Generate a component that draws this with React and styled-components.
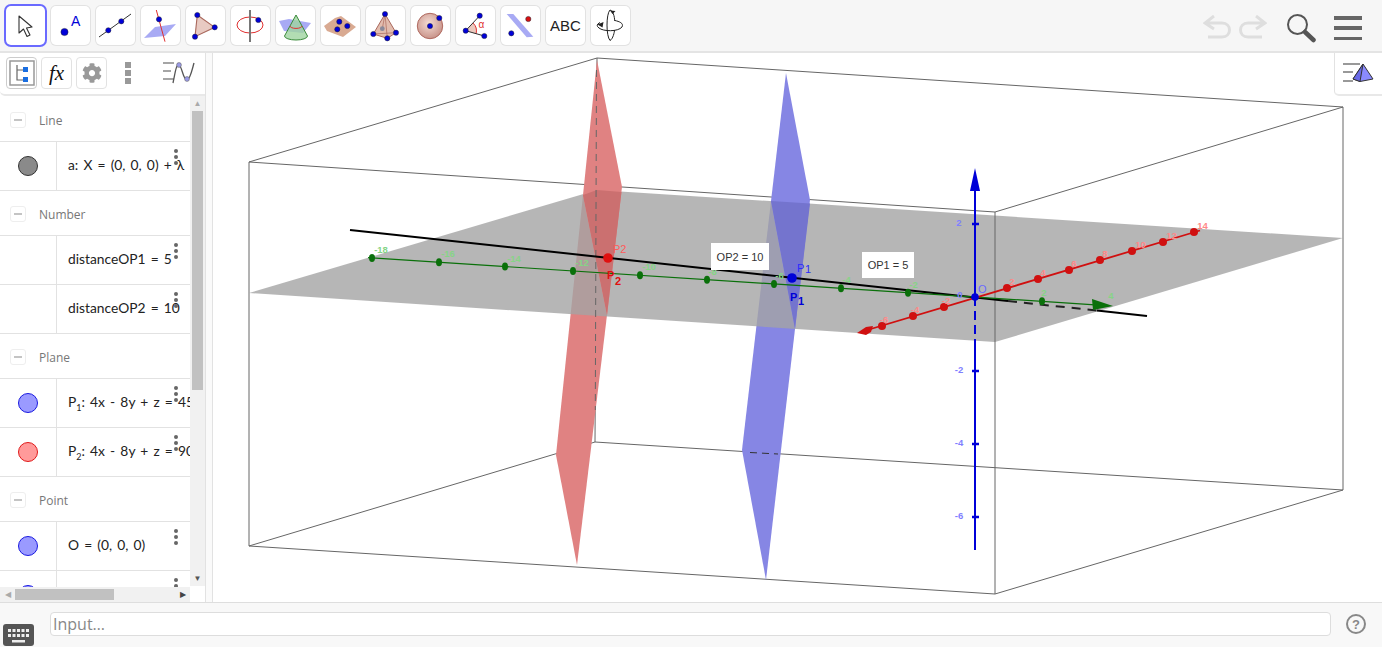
import React from "react";
import styled, { createGlobalStyle } from "styled-components";
import { FaCog } from "react-icons/fa";

const GlobalStyle = createGlobalStyle`
  html, body {
    margin: 0;
    height: 100%;
    overflow: hidden;
    background: #fff;
    font-family: "Liberation Sans", Arial, sans-serif;
  }
  #root { height: 100%; }
`;

const blue = "#0000d8";

const AbcLabel = styled.span`
  font-size: 15px;
  color: #222;
`;

const Dot = ({ x, y, r = 2.6, fill = blue }) => (
  <circle cx={x} cy={y} r={r} fill={fill} stroke="#223" strokeWidth="0.5" />
);

const Svg39 = ({ children }) => (
  <svg width="39" height="39" viewBox="0 0 39 39">
    {children}
  </svg>
);

const tools = [
  <Svg39 key="move">
    <path d="M13 10V27L17.5 23L21 30.5L24 29L20.5 22L26 21Z" fill="#fff" stroke="#333" strokeWidth="1.1" strokeLinejoin="round" />
  </Svg39>,
  <Svg39 key="point">
    <Dot x={13.5} y={26} r={3.6} />
    <text x="20" y="20" fontSize="14" fill={blue} fontFamily="Liberation Sans">A</text>
  </Svg39>,
  <Svg39 key="line">
    <line x1="3" y1="31" x2="35" y2="8" stroke="#333" strokeWidth="1" />
    <Dot x={12.3} y={24.3} />
    <Dot x={25.3} y={15.3} />
  </Svg39>,
  <Svg39 key="perp">
    <polygon points="3,32 14,21 35,18 24,30" fill="#a8aaf4" />
    <line x1="15.3" y1="4" x2="24" y2="35.7" stroke="#e03030" strokeWidth="1" />
    <Dot x={18} y={13.3} />
  </Svg39>,
  <Svg39 key="polygon">
    <polygon points="11.3,9 28.7,21.3 9,30.7" fill="#e8cac2" stroke="#a9685c" strokeWidth="1.1" />
    <Dot x={11.3} y={9} />
    <Dot x={28.7} y={21.3} />
    <Dot x={9} y={30.7} />
  </Svg39>,
  <Svg39 key="circle">
    <ellipse cx="19" cy="19" rx="13" ry="8" fill="none" stroke="#e03030" strokeWidth="1" />
    <line x1="19" y1="4" x2="19" y2="36" stroke="#777" strokeWidth="2" />
    <Dot x={27.3} y={14} />
  </Svg39>,
  <Svg39 key="cone">
    <polygon points="3,15 13,13 35,17 27,27 8,25" fill="#a8aaf4" />
    <path d="M20 9L8.5 30A11.500 4 0 0 0 31.500 30Z" fill="#9fd4a0" fillOpacity="0.8" stroke="#3a8a3a" strokeWidth="1" />
    <path d="M14 20A6 2.400 0 0 0 26 20" fill="none" stroke="#e03030" strokeWidth="1" />
  </Svg39>,
  <Svg39 key="plane">
    <polygon points="3,20 14,12 20,10 35,21 22,31 6,25" fill="#d9aa92" />
    <Dot x={18.3} y={15.7} />
    <Dot x={26.3} y={20} />
    <Dot x={16.3} y={23.3} />
  </Svg39>,
  <Svg39 key="pyramid">
    <polygon points="19,8 7.3,28 21.3,32.3 30,26.7" fill="#e2bcae" stroke="#a9685c" strokeWidth="1" />
    <path d="M19 8L21.3 32.3M19 8L16.3 22.7M7.3 28L30 26.7" stroke="#a9685c" strokeWidth="0.7" fill="none" />
    <circle cx="16.3" cy="22.7" r="2.4" fill="#8a8a9a" />
    <Dot x={19} y={8} />
    <Dot x={7.3} y={28} />
    <Dot x={30} y={26.7} />
    <Dot x={21.3} y={32.3} />
  </Svg39>,
  <Svg39 key="sphere">
    <defs>
      <radialGradient id="sphereFill" cx="0.45" cy="0.4" r="0.65">
        <stop offset="0" stopColor="#f4dcd4" />
        <stop offset="1" stopColor="#c58e84" />
      </radialGradient>
    </defs>
    <circle cx="19" cy="20" r="12.7" fill="url(#sphereFill)" stroke="#b06a60" strokeWidth="1" />
    <Dot x={19} y={20} />
    <Dot x={28.3} y={12} />
  </Svg39>,
  <Svg39 key="angle">
    <path d="M9.7 24.7L17 17A11 11 0 0 1 20 28Z" fill="#eccabf" />
    <path d="M17 17A11 11 0 0 1 20 28" fill="none" stroke="#e03030" strokeWidth="1" />
    <path d="M23.7 9.7L9.7 24.7L28.3 30" fill="none" stroke="#333" strokeWidth="1" />
    <Dot x={23.7} y={9.7} />
    <Dot x={9.7} y={24.7} />
    <Dot x={28.3} y={30} />
    <text x="22.5" y="22" fontSize="10" fill="#e03030" fontFamily="Liberation Sans">α</text>
  </Svg39>,
  <Svg39 key="mirror">
    <polygon points="5.7,8 12.3,8 32.3,30.7 25.7,31.3" fill="#a8aaf4" />
    <Dot x={27.3} y={13} fill="#d81010" />
    <Dot x={10.3} y={27.3} />
  </Svg39>,
  <AbcLabel key="abc">ABC</AbcLabel>,
  <Svg39 key="rotate">
    <path d="M9 16.500A12.700 5 0 0 0 8 22C12 25.500 27 26 31 21C33 17 28 15.500 24 14.500" fill="none" stroke="#222" strokeWidth="1" />
    <path d="M19 4C15 8 15 30 19 34.500C22 33 23.500 26 23.500 24M19 4C22 5 23.500 10 23.700 15" fill="none" stroke="#222" strokeWidth="1" />
    <path d="M6.500 18.500L12.500 16L11.500 21.500Z M21.500 8L19 4.500L24.500 5Z" fill="#222" />
  </Svg39>,
];

const groups = [
  { title: "Line", rows: [{ marble: "gray", text: "a: X = (0, 0, 0) + λ" }] },
  {
    title: "Number",
    rows: [{ text: "distanceOP1 = 5" }, { text: "distanceOP2 = 10" }],
  },
  {
    title: "Plane",
    rows: [
      { marble: "blue", sub: "1", text: ": 4x - 8y + z = 45" },
      { marble: "red", sub: "2", text: ": 4x - 8y + z = 90" },
    ],
  },
  {
    title: "Point",
    rows: [{ marble: "blue", text: "O = (0, 0, 0)" }, { marble: "blue", text: "" }],
  },
];

const marbles = {
  gray: ["#8a8a8a", "#333"],
  blue: ["#9a9aff", "#1a1ae0"],
  red: ["#ff9a9a", "#e01a1a"],
};

const greenTicks = [
  [372, "-18"], [439, "-16"], [505, "-14"], [573, "-12"], [640, "-10"], [707, "-8"],
  [774, "-6"], [841, "-4"], [908, "-2"], [1042, "2"],
];
const redTicks = [
  [882, 326, "-6"], [913, 316, "-4"], [944, 307, "-2"], [1007, 288, "2"], [1038, 279, "4"],
  [1069, 270, "6"], [1100, 260, "8"], [1132, 251, "10"], [1163, 242, "12"], [1194, 232, "14"],
];
const blueTicks = [[224, "2"], [371, "-2"], [444, "-4"], [517, "-6"]];

const greenY = (x) => 297 + (x - 975) * 0.0647;

const Scene = () => (
  <SceneSvg viewBox="213 53 1169 549">
    <g stroke="#666" strokeWidth="1" fill="none">
      <path d="M249 162L597 58L1343 107L995 212ZM249 546L595 442L1343 490L995 594ZM249 162V546M1343 107V490M597 58L595 442" />
    </g>

    <polygon points="583,195 607,315 577,565 556,455" fill="#e08282" />
    <polygon points="771,201 795,329 766,580 742,450" fill="#8686e4" />
    <polygon points="249,293 597,190 1343,238 995,342" fill="#a4a4a4" fillOpacity="0.8" />
    <polygon points="597,60 622,187 607,315 583,195" fill="#e08282" />
    <polygon points="583,195 597,190 621.5,192 607,315" fill="#cb7070" />
    <polygon points="786,73 810,200 795,329 771,201" fill="#8686e4" />
    <polygon points="771,201 810,203.5 795,329" fill="#7474ce" />

    <line x1="596.5" y1="70" x2="595.3" y2="410" stroke="#666" strokeDasharray="7 5" />
    <line x1="750" y1="452.5" x2="778" y2="454" stroke="#333" strokeDasharray="7 5" />
    <line x1="995" y1="212" x2="995" y2="594" stroke="#666" />

    <line x1="350" y1="230" x2="1008" y2="301" stroke="#000" strokeWidth="2" />
    <line x1="1008" y1="301" x2="1097" y2="310.6" stroke="#222" strokeWidth="2" strokeDasharray="9 7" />
    <line x1="1097" y1="310.6" x2="1147" y2="316" stroke="#000" strokeWidth="2" />

    <line x1="368" y1="257.7" x2="1095" y2="304.8" stroke="#0a700a" strokeWidth="1.2" />
    <polygon points="1113,306 1092,299 1093,310" fill="#0a700a" />
    {greenTicks.map(([x, label]) => (
      <g key={x}>
        <ellipse cx={x} cy={greenY(x)} rx="3" ry="4" fill="#0a700a" />
        <AxisLabel x={x + 2 + 3.5 * (label.length - 1)} y={greenY(x) - 5} fill="#86d486">{label}</AxisLabel>
      </g>
    ))}
    <AxisLabel x={1111} y={299} fill="#86d486">4</AxisLabel>

    <line x1="864" y1="331" x2="1200" y2="230.5" stroke="#d01010" strokeWidth="1.8" />
    <polygon points="857,333 866,327 873,326 871,332 866,335" fill="#d01010" />
    {redTicks.map(([x, y, label]) => (
      <g key={x}>
        <circle cx={x} cy={y} r="4" fill="#d01010" />
        <AxisLabel
          x={label[0] === "-" ? x + 2 : x + 5 + 3.5 * (label.length - 1)}
          y={y - 3}
          fill="#ff8888"
        >
          {label}
        </AxisLabel>
      </g>
    ))}

    <line x1="975" y1="188" x2="975" y2="297" stroke={blue} strokeWidth="2" />
    <line x1="975" y1="297" x2="975" y2="342" stroke={blue} strokeWidth="2" strokeDasharray="9 5" />
    <line x1="975" y1="342" x2="975" y2="550" stroke={blue} strokeWidth="2" />
    <polygon points="975,168 970,191 980,191" fill={blue} />
    {blueTicks.map(([y, label]) => (
      <g key={y}>
        <line x1="972" y1={y} x2="979" y2={y} stroke={blue} strokeWidth="2.5" />
        <AxisLabel x={959} y={y + 2} fill="#7f7fff">{label}</AxisLabel>
      </g>
    ))}
    <AxisLabel x={960} y={298} fill="#7f7fff">0</AxisLabel>

    <circle cx="975" cy="297" r="3.8" fill={blue} />
    <PointLabel x={978} y={293} fill="#6a6aff" fontSize="11">O</PointLabel>

    <circle cx="792" cy="278" r="4.8" fill={blue} />
    <PointLabel x={797} y={272} fill="#2a2aff">P</PointLabel>
    <PointLabel x={805} y={273} fill="#2a2aff" fontSize="9">1</PointLabel>
    <PointLabel x={790} y={301} fill={blue} fontWeight="bold">P</PointLabel>
    <PointLabel x={798} y={305} fill={blue} fontSize="9" fontWeight="bold">1</PointLabel>

    <circle cx="608" cy="258" r="4.8" fill="#e01010" />
    <PointLabel x={613} y={253} fill="#ff5a5a">P2</PointLabel>
    <PointLabel x={607} y={279} fill="#e01010" fontWeight="bold">P</PointLabel>
    <PointLabel x={615} y={285} fill="#e01010" fontSize="9" fontWeight="bold">2</PointLabel>
  </SceneSvg>
);

const App = () => (
  <Page>
    <GlobalStyle />
    <Toolbar>
      <ToolGroup>
        {tools.map((icon, i) => (
          <ToolButton key={i} $active={i === 0}>{icon}</ToolButton>
        ))}
      </ToolGroup>
      <RightTools>
        <svg width="64" height="26" viewBox="0 0 64 26">
          <path d="M3 8H19C29 8 29 22 19 22H5M11 1L2 8L11 14" fill="none" stroke="#dedede" strokeWidth="3" />
          <path d="M61 8H45C35 8 35 22 45 22H59M53 1L62 8L53 14" fill="none" stroke="#dedede" strokeWidth="3" />
        </svg>
        <SearchIcon width="30" height="30" viewBox="0 0 30 30">
          <circle cx="11.5" cy="11.5" r="9.5" fill="none" stroke="#555" strokeWidth="2" />
          <line x1="19" y1="19" x2="27.5" y2="27" stroke="#555" strokeWidth="4.5" strokeLinecap="round" />
        </SearchIcon>
        <Burger>
          <span />
          <span />
          <span />
        </Burger>
      </RightTools>
    </Toolbar>

    <Main>
      <SidePanel>
        <PanelHeader>
          <HeaderButton $strong>
            <svg width="26" height="26" viewBox="0 0 26 26">
              <rect x="1" y="1" width="24" height="24" fill="none" stroke="#999" strokeWidth="1.5" />
              <path d="M8 5V20H15M8 10H15" fill="none" stroke="#666" strokeWidth="1.2" />
              <rect x="14" y="7" width="5" height="5" fill="#1a6ee0" />
              <rect x="14" y="17" width="5" height="5" fill="#1a6ee0" />
            </svg>
          </HeaderButton>
          <HeaderButton><Fx>fx</Fx></HeaderButton>
          <HeaderButton><FaCog size={20} color="#999" /></HeaderButton>
          <MoreBars>
            <span />
            <span />
            <span />
          </MoreBars>
          <StyleIcon width="34" height="26" viewBox="0 0 34 26">
            <path d="M1 3H12M1 11H9M1 19H12" stroke="#888" strokeWidth="1.5" />
            <path d="M11 23C13 14 14 4 17 5C20 6 21 20 25 20C28 20 30 10 32 3" fill="none" stroke="#555" strokeWidth="1.3" />
            <circle cx="17" cy="5" r="2.4" fill="#9a9ae8" stroke="#666" strokeWidth="0.6" />
            <circle cx="25" cy="19" r="2.4" fill="#9a9ae8" stroke="#666" strokeWidth="0.6" />
          </StyleIcon>
        </PanelHeader>
        <ListArea>
          <List>
            {groups.map((group) => (
              <React.Fragment key={group.title}>
                <GroupTitle>
                  <Collapse />
                  <GroupName>{group.title}</GroupName>
                </GroupTitle>
                {group.rows.map((row, i) => (
                  <Row key={i}>
                    <MarbleCell>
                      {row.marble && <Marble $kind={row.marble} />}
                    </MarbleCell>
                    <RowText>
                      {row.sub ? <>P<sub>{row.sub}</sub></> : null}
                      {row.text}
                    </RowText>
                    <RowDots>
                      <span />
                      <span />
                      <span />
                    </RowDots>
                  </Row>
                ))}
              </React.Fragment>
            ))}
          </List>
          <VScroll>
            <Arrow>▲</Arrow>
            <VThumb />
            <Arrow>▼</Arrow>
          </VScroll>
          <HScroll>
            <HArrow $dim>◀</HArrow>
            <HThumb />
            <HArrow>▶</HArrow>
          </HScroll>
        </ListArea>
      </SidePanel>
      <Divider />
      <Graphics>
        <Scene />
        <StyleTab>
          <svg width="34" height="24" viewBox="0 0 34 24">
            <path d="M1 2H18M1 10H11M1 19H11" stroke="#999" strokeWidth="2" />
            <polygon points="21,2 31,17 18,19.5 11,17" fill="#8a8aff" stroke="#333" strokeWidth="1" />
            <polygon points="21,2 11,17 18,19.5" fill="#6a6ae8" stroke="#333" strokeWidth="1" />
          </svg>
        </StyleTab>
        <Note $x={498} $y={190} $w={58} $h={27}>OP2 = 10</Note>
        <Note $x={649} $y={199} $w={52} $h={26}>OP1 = 5</Note>
      </Graphics>
    </Main>

    <BottomBar>
      <Keyboard width="31" height="22" viewBox="0 0 31 22">
        <rect width="31" height="22" rx="3" fill="#555" />
        <path d="M5 5h3v3h-3zM9.500 5h3v3h-3zM14 5h3v3h-3zM18.500 5h3v3h-3zM23 5h3v3h-3zM5 10h3v3h-3zM9.500 10h3v3h-3zM14 10h3v3h-3zM18.500 10h3v3h-3zM23 10h3v3h-3zM9 16h13v2.500h-13z" fill="#eee" />
      </Keyboard>
      <InputBox placeholder="Input…" />
      <Help>?</Help>
    </BottomBar>
  </Page>
);

export default App;

const Page = styled.div`
  display: grid;
  grid-template-rows: 53px 1fr 45px;
  height: 100vh;
  width: 100%;
  overflow: hidden;
`;

const Toolbar = styled.header`
  display: flex;
  align-items: flex-start;
  justify-content: space-between;
  box-sizing: border-box;
  padding: 6px 20px 0 6px;
  background: #f6f6f6;
  border-bottom: 2px solid #e4e4e4;
`;

const ToolGroup = styled.div`
  display: flex;
  gap: 6px;
`;

const ToolButton = styled.div`
  position: relative;
  display: flex;
  align-items: center;
  justify-content: center;
  box-sizing: border-box;
  width: 39px;
  height: 39px;
  background: #fff;
  border-radius: 5px;
  box-shadow: 0 0 0 ${(p) => (p.$active ? "2px #6a6aff" : "1px #e2e2e2")};

  svg {
    position: absolute;
    left: 0;
    top: 0;
  }
`;

const RightTools = styled.div`
  display: flex;
  align-items: center;
  padding-top: 7px;
`;

const SearchIcon = styled.svg`
  margin-left: 19px;
`;

const Burger = styled.div`
  display: flex;
  flex-direction: column;
  justify-content: space-between;
  width: 28px;
  height: 24px;
  margin-left: 18px;

  span {
    display: block;
    height: 3.5px;
    background: #666;
  }
`;

const Main = styled.main`
  display: flex;
  min-height: 0;
`;

const SidePanel = styled.aside`
  display: flex;
  flex-direction: column;
  flex: 0 0 205px;
  min-height: 0;
`;

const PanelHeader = styled.div`
  display: flex;
  align-items: center;
  gap: 4px;
  box-sizing: border-box;
  height: 43px;
  padding: 0 0 1px 6px;
  background: #fff;
  border-bottom: 2px solid #e8e8e8;
  border-bottom-left-radius: 5px;
`;

const HeaderButton = styled.div`
  display: flex;
  align-items: center;
  justify-content: center;
  box-sizing: border-box;
  width: 31px;
  height: 32px;
  border: 1px solid ${(p) => (p.$strong ? "#ccc" : "#e2e2e2")};
  border-radius: 4px;
`;

const Fx = styled.span`
  font-family: "Liberation Serif", serif;
  font-style: italic;
  font-size: 21px;
  color: #111;
`;

const MoreBars = styled.div`
  display: flex;
  flex-direction: column;
  gap: 2px;
  margin-left: 14px;

  span {
    display: block;
    width: 6px;
    height: 6px;
    background: #999;
  }
`;

const StyleIcon = styled.svg`
  margin-left: 27px;
`;

const ListArea = styled.div`
  position: relative;
  flex: 1;
  min-height: 0;
  overflow: hidden;
`;

const List = styled.div`
  box-sizing: border-box;
  width: 190px;
  height: 491px;
  padding-top: 1px;
  overflow: hidden;
`;

const GroupTitle = styled.div`
  display: flex;
  align-items: center;
  box-sizing: border-box;
  height: 45px;
  padding: 2px 0 0 10px;
  border-bottom: 1px solid #e2e2e2;
`;

const Collapse = styled.span`
  position: relative;
  box-sizing: border-box;
  width: 16px;
  height: 16px;
  border: 1px solid #eee;
  border-radius: 3px;

  &::after {
    content: "";
    position: absolute;
    left: 3px;
    right: 3px;
    top: 6px;
    height: 2px;
    background: #c4c4c4;
  }
`;

const GroupName = styled.span`
  margin-left: 13px;
  font-family: "Open Sans", sans-serif;
  font-size: 12px;
  color: #777;
`;

const Row = styled.div`
  position: relative;
  display: flex;
  box-sizing: border-box;
  height: 49px;
  border-bottom: 1px solid #e2e2e2;
  overflow: hidden;
`;

const MarbleCell = styled.div`
  display: flex;
  align-items: center;
  justify-content: center;
  flex: 0 0 56px;
  border-right: 1px solid #e2e2e2;
`;

const Marble = styled.span`
  box-sizing: border-box;
  width: 20px;
  height: 20px;
  border-radius: 50%;
  background: ${(p) => marbles[p.$kind][0]};
  border: 1px solid ${(p) => marbles[p.$kind][1]};
`;

const RowText = styled.div`
  align-self: center;
  margin-left: 11px;
  padding-bottom: 3px;
  font-family: "Lato", sans-serif;
  font-size: 13.8px;
  word-spacing: 1.6px;
  color: #222;
  white-space: nowrap;

  sub {
    font-size: 9px;
    line-height: 0;
  }
`;

const RowDots = styled.div`
  position: absolute;
  left: 174px;
  top: 7px;
  display: flex;
  flex-direction: column;
  gap: 2px;

  span {
    display: block;
    width: 4px;
    height: 4px;
    border-radius: 50%;
    background: #666;
  }
`;

const VScroll = styled.div`
  position: absolute;
  right: 0;
  top: 0;
  bottom: 16px;
  display: flex;
  flex-direction: column;
  align-items: center;
  justify-content: space-between;
  width: 15px;
  background: #f1f1f1;
`;

const Arrow = styled.span`
  font-size: 8px;
  line-height: 15px;
  color: #555;

  &:first-child {
    color: #aaa;
  }
`;

const VThumb = styled.div`
  width: 11px;
  height: 279px;
  margin-bottom: auto;
  background: #c1c1c1;
`;

const HScroll = styled.div`
  position: absolute;
  left: 0;
  bottom: 0;
  display: flex;
  align-items: center;
  box-sizing: border-box;
  width: 190px;
  height: 15px;
  background: #f1f1f1;
`;

const HArrow = styled.span`
  flex: 0 0 15px;
  font-size: 8px;
  text-align: center;
  color: ${(p) => (p.$dim ? "#aaa" : "#444")};

  &:last-child {
    margin-left: auto;
  }
`;

const HThumb = styled.div`
  width: 99px;
  height: 11px;
  background: #c1c1c1;
`;

const Divider = styled.div`
  flex: 0 0 6px;
  background: #fafafa;
  border-left: 1px solid #e2e2e2;
  border-right: 1px solid #e2e2e2;
`;

const Graphics = styled.section`
  position: relative;
  flex: 1;
  min-width: 0;
  background: #fff;
`;

const SceneSvg = styled.svg`
  display: block;
  width: 100%;
  height: 100%;
`;

const AxisLabel = styled.text`
  font-family: "Liberation Sans", sans-serif;
  font-size: 9.5px;
  font-weight: bold;
  text-anchor: middle;
`;

const PointLabel = styled.text`
  font-family: "Liberation Sans", sans-serif;
  font-size: 11px;
`;

const StyleTab = styled.div`
  position: absolute;
  right: 0;
  top: 0;
  display: flex;
  align-items: center;
  justify-content: center;
  box-sizing: border-box;
  width: 48px;
  height: 43px;
  background: #fff;
  border-left: 1px solid #e2e2e2;
  border-bottom: 2px solid #e8e8e8;
  border-bottom-left-radius: 5px;
`;

const Note = styled.div`
  position: absolute;
  left: ${(p) => p.$x}px;
  top: ${(p) => p.$y}px;
  display: flex;
  align-items: center;
  justify-content: center;
  width: ${(p) => p.$w}px;
  height: ${(p) => p.$h}px;
  background: #fff;
  font-size: 11px;
  color: #333;
`;

const BottomBar = styled.footer`
  display: flex;
  align-items: center;
  box-sizing: border-box;
  padding: 0 16px 2px 0;
  background: #f8f8f8;
  border-top: 1px solid #dedede;
`;

const Keyboard = styled.svg`
  flex: none;
  margin: 21px 0 0 3px;
`;

const InputBox = styled.input`
  flex: 1;
  box-sizing: border-box;
  height: 24px;
  margin: 0 15px 0 16px;
  padding: 0 2px;
  background: #fff;
  border: 1px solid #ddd;
  border-radius: 4px;
  outline: none;
  font-family: "Open Sans", sans-serif;
  font-size: 16px;

  &::placeholder {
    color: #888;
  }
`;

const Help = styled.span`
  display: flex;
  align-items: center;
  justify-content: center;
  box-sizing: border-box;
  width: 20px;
  height: 20px;
  border: 2px solid #888;
  border-radius: 50%;
  font-size: 13px;
  font-weight: bold;
  color: #888;
`;
